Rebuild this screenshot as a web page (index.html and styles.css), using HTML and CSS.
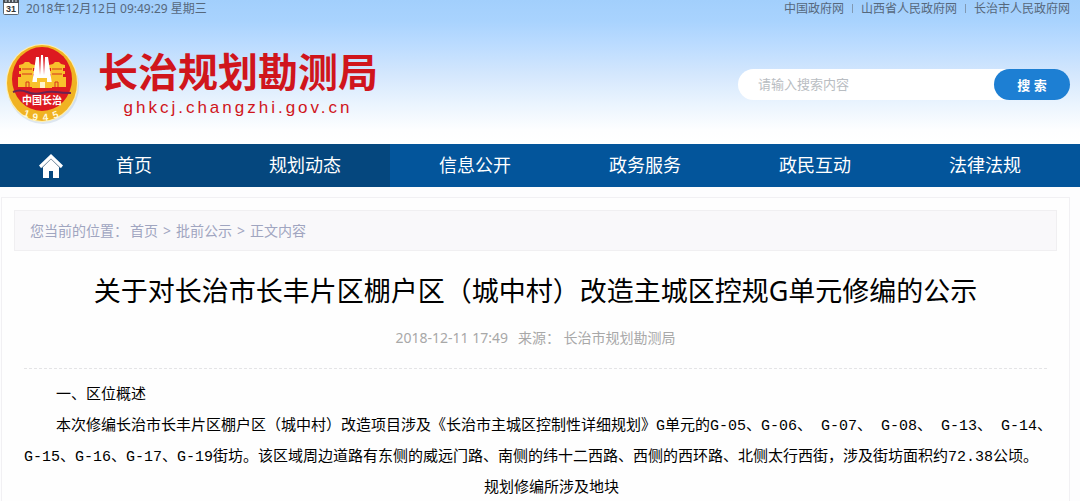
FILE: index.html
```html
<!DOCTYPE html>
<html lang="zh-CN">
<head>
    <meta charset="UTF-8">
    <meta name="viewport" content="width=device-width, initial-scale=1.0">
    <title>长治规划勘测局</title>
    <link rel="stylesheet" href="styles.css">
</head>
<body>

<header class="header">
    <div class="topbar">
        <div class="date">
            <svg class="calendar" viewBox="0 0 16 16" aria-hidden="true">
                <rect x="0.5" y="0.5" width="15" height="14" rx="1" fill="#fff" stroke="#5c6670"/>
                <path d="M0 0h16v3H0z" fill="#4a4f55"/>
                <path d="M3 0v2M6.300 0v2M9.700 0v2M13 0v2" stroke="#d8e4ee" stroke-width="1"/>
                <text x="8" y="12" text-anchor="middle">31</text>
            </svg>
            <span>2018年12月12日 09:49:29 星期三</span>
        </div>
        <div class="top-links">
            <a href="#">中国政府网</a>
            <a href="#">山西省人民政府网</a>
            <a href="#">长治市人民政府网</a>
        </div>
    </div>
    <div class="banner">
        <a class="logo" href="#">
            <svg class="emblem" viewBox="0 0 76 82" aria-hidden="true">
                <ellipse cx="38" cy="43" rx="36" ry="38" fill="#8fa9c4" opacity="0.25"/>
                <ellipse cx="37" cy="40" rx="36" ry="39" fill="#fff0b0"/>
                <ellipse cx="37" cy="40" rx="35" ry="38" fill="#f0b323"/>
                <ellipse cx="37" cy="36" rx="30" ry="32" fill="#dd1a20"/>
                <path d="M13 44V34h3v-3h-2v-3h2v-3h-2v-3l4-1 2-2h4l2 2 4 1v3h-2v3h2v3h-2v3h4v10zM61 44V34h-3v-3h2v-3h-2v-3h2v-3l-4-1-2-2h-4l-2 2-4 1v3h2v3h-2v3h2v3h-4v10z" fill="#f8c12c"/>
                <path d="M17 26h10M17 31h10M47 26h10M47 31h10M21 44v-5h3v5M50 44v-5h3v5" fill="none" stroke="#d5331f" stroke-width="1"/>
                <path d="M27 41l4-27h3l1 18 1-20h2l1 20 1-18h3l4 27z" fill="#fff"/>
                <path d="M27 45v-6h5v-4h10v4h5v6z" fill="#f8c12c"/>
                <path d="M35 45v-6h5v6" fill="#fff3cb"/>
                <path d="M8 49q7-3 14 0t15 1 14-1 15 1" fill="none" stroke="#6b2350" stroke-width="2"/>
                <text class="emblem-name" x="37" y="61" text-anchor="middle">中国长治</text>
                <text class="emblem-year" x="18" y="73" transform="rotate(18 18 73)">1</text>
                <text class="emblem-year" x="27" y="77" transform="rotate(8 27 77)">9</text>
                <text class="emblem-year" x="38" y="78" transform="rotate(-6 38 78)">4</text>
                <text class="emblem-year" x="49" y="76" transform="rotate(-20 49 76)">5</text>
            </svg>
            <span class="logo-text">
                <strong>长治规划勘测局</strong>
                <span class="domain">ghkcj.changzhi.gov.cn</span>
            </span>
        </a>
        <form class="search">
            <input type="text" aria-label="搜索" placeholder="请输入搜索内容">
            <button type="submit">搜 索</button>
        </form>
    </div>
</header>

<nav class="nav">
    <a class="home active" href="#">
        <svg viewBox="0 0 24 24" aria-hidden="true">
            <path d="M4 13l8-8 8 8v11h-6v-7h-4v7H4z" fill="#fff"/>
            <path d="M2 13.500L12 4l10 9.500" fill="none" stroke="#8b98a5" stroke-width="2"/>
            <path d="M12 0L0 11.500 2 14l10-9.500L22 14l2-2.500z" fill="#fff"/>
        </svg>
        首页
    </a>
    <a class="active" href="#">规划动态</a>
    <a href="#">信息公开</a>
    <a href="#">政务服务</a>
    <a href="#">政民互动</a>
    <a href="#">法律法规</a>
</nav>

<main class="content">
    <div class="breadcrumb">
        <span>您当前的位置：</span>
        <a href="#">首页</a>
        <span>&gt;</span>
        <a href="#">批前公示</a>
        <span>&gt;</span>
        <span>正文内容</span>
    </div>
    <article class="article">
        <h1>关于对长治市长丰片区棚户区（城中村）改造主城区控规G单元修编的公示</h1>
        <div class="meta">
            <span>2018-12-11 17:49</span>
            <span>来源： 长治市规划勘测局</span>
        </div>
        <div class="text">
            <p>一、区位概述</p>
            <p>本次修编长治市长丰片区棚户区（城中村）改造项目涉及《长治市主城区控制性详细规划》G单元的G-05、G-06、 G-07、 G-08、 G-13、 G-14、<br>G-15、G-16、G-17、G-19街坊。该区域周边道路有东侧的威远门路、南侧的纬十二西路、西侧的西环路、北侧太行西街，涉及街坊面积约72.38公顷。</p>
            <p class="caption">规划修编所涉及地块</p>
        </div>
    </article>
</main>

</body>
</html>
```
FILE: styles.css
```css
* {
    box-sizing: border-box;
}
body {
    margin: 0;
    background-color: #fdfdfe;
    font-family: "Noto Sans", "Noto Sans CJK SC", sans-serif;
    font-size: 14px;
    color: #000;
}
a {
    color: inherit;
    text-decoration: none;
}
.header {
    height: 144px;
    background: linear-gradient(#a2cffc 0%, #a9d3fe 15%, #badbff 30%, #d2e6fd 50%, #eaf4fe 72%, #fdfeff 90%, #fff 100%);
}
.topbar {
    display: flex;
    justify-content: space-between;
    padding: 0 10px 0 3px;
    font-size: 12px;
    line-height: 18px;
    color: #56687c;
}
.date {
    display: flex;
    gap: 7px;
}
.calendar {
    width: 16px;
    height: 16px;
}
.calendar text {
    font: bold 9px "Liberation Sans", sans-serif;
    fill: #333;
}
.top-links {
    display: flex;
}
.top-links a + a::before {
    content: "";
    display: inline-block;
    height: 9px;
    margin: 0 8px;
    border-left: 1px solid #8199b3;
}
.banner {
    display: flex;
    justify-content: space-between;
    align-items: center;
    padding: 25px 10px 0 5px;
}
.logo {
    display: flex;
    gap: 17px;
}
.emblem {
    width: 76px;
    height: 82px;
}
.emblem-name {
    font: bold 10px "Noto Sans CJK SC", sans-serif;
    fill: #fff;
}
.emblem-year {
    font: bold 10px "Liberation Sans", sans-serif;
    fill: #fff8dc;
}
.logo-text {
    display: flex;
    flex-direction: column;
    align-items: center;
    color: #d0151c;
}
.logo-text strong {
    font-family: "Noto Sans CJK SC", sans-serif;
    font-size: 40px;
    line-height: 54px;
}
.domain {
    font-family: "Liberation Sans", sans-serif;
    font-size: 17px;
    line-height: 22px;
    letter-spacing: 3px;
}
.search {
    display: flex;
    width: 332px;
    height: 31px;
    border-radius: 16px;
    background-color: #fff;
}
.search input {
    flex: 1;
    min-width: 0;
    padding: 0 20px;
    border: none;
    outline: none;
    background: none;
    font: 13px "Noto Sans", "Noto Sans CJK SC", sans-serif;
}
.search input::placeholder {
    color: #b9bdc2;
}
.search button {
    width: 76px;
    padding: 0;
    border: none;
    border-radius: 16px;
    background-color: #1d7fd3;
    color: #fff;
    font: bold 13px "Noto Sans", "Noto Sans CJK SC", sans-serif;
    cursor: pointer;
}
.nav {
    display: grid;
    grid-template-columns: 220fr 170fr 170fr 170fr 170fr 180fr;
    background-color: #03559b;
    color: #fff;
    font-size: 18px;
    line-height: 43px;
    text-align: center;
}
.nav a:last-child {
    padding-right: 10px;
}
.nav .active {
    background-color: #05477e;
}
.nav .home {
    display: flex;
    align-items: center;
    gap: 53px;
    padding-left: 39px;
}
.home svg {
    width: 24px;
    height: 24px;
}
.content {
    margin: 10px 10px 0 1px;
    padding: 12px 12px 0;
    border: 1px solid #f1f0f3;
    border-bottom: none;
    background-color: #fefefe;
}
.breadcrumb {
    display: flex;
    gap: 5px;
    padding: 0 15px;
    border: 1px solid #f0eff1;
    background-color: #f9f8fa;
    line-height: 39px;
    color: #a0a5c0;
}
.breadcrumb span:first-child {
    margin-right: -3px;
}
.article {
    padding: 0 10px;
}
.article h1 {
    margin: 20px 0 15px;
    font-size: 27px;
    font-weight: normal;
    line-height: 40px;
    text-align: center;
}
.meta {
    display: flex;
    justify-content: center;
    gap: 10px;
    padding-bottom: 18px;
    border-bottom: 1px dashed #e4e4e6;
    line-height: 24px;
    color: #a8a8a8;
}
.text {
    padding-top: 11px;
    font-family: "Liberation Mono", "Noto Sans CJK SC", monospace;
    font-size: 15px;
    line-height: 31px;
    white-space: nowrap;
}
.text p {
    margin: 0;
    text-indent: 32px;
}
.text .caption {
    text-align: center;
}
```
